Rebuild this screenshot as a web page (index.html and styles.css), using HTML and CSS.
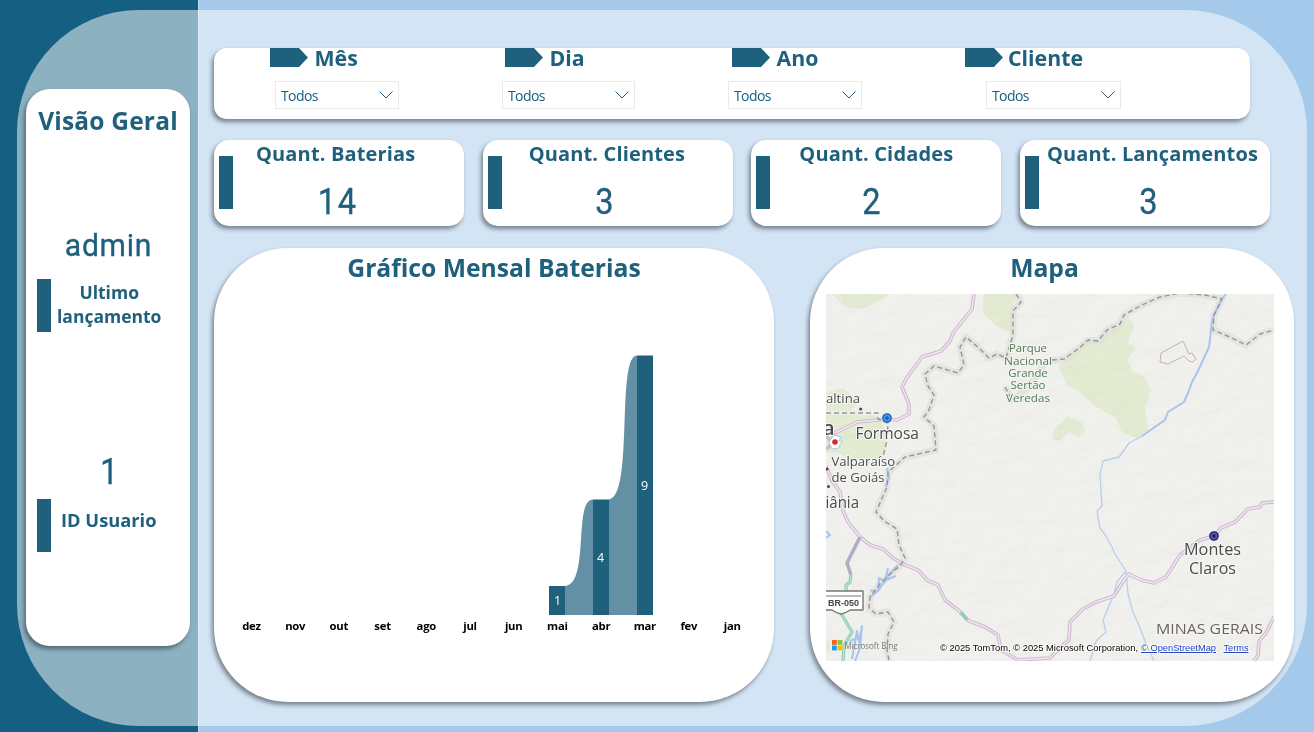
FILE: index.html
```html
<!DOCTYPE html>
<html lang="pt-BR">
<head>
<meta charset="utf-8">
<title>Visão Geral</title>
<link rel="stylesheet" href="styles.css">
</head>
<body>
<div class="shell">
  <aside class="rail">
    <section class="card overview">
      <h1 class="overview-title">Visão Geral</h1>
      <div class="value value-user"><span>admin</span></div>
      <div class="fact fact-user"><i class="bar"></i><h2>Ultimo<br>lançamento</h2></div>
      <div class="value value-id"><span>1</span></div>
      <div class="fact fact-id"><i class="bar"></i><h2>ID Usuario</h2></div>
    </section>
  </aside>
  <main class="main">
    <section class="card filters">
      <div class="filter f-mes">
        <h2><svg class="tag" viewBox="0 0 38 19"><path d="M0 0H29L38 9.5L29 19H0Z"/></svg><span>Mês</span></h2>
        <div class="select"><span>Todos</span><svg class="chev" viewBox="0 0 14 8"><path d="M.5 .5L7 7L13.500 .5"/></svg></div>
      </div>
      <div class="filter f-dia">
        <h2><svg class="tag" viewBox="0 0 38 19"><path d="M0 0H29L38 9.500L29 19H0Z"/></svg><span>Dia</span></h2>
        <div class="select"><span>Todos</span><svg class="chev" viewBox="0 0 14 8"><path d="M.5 .5L7 7L13.500 .5"/></svg></div>
      </div>
      <div class="filter f-ano">
        <h2><svg class="tag" viewBox="0 0 38 19"><path d="M0 0H29L38 9.500L29 19H0Z"/></svg><span>Ano</span></h2>
        <div class="select"><span>Todos</span><svg class="chev" viewBox="0 0 14 8"><path d="M.5 .5L7 7L13.500 .5"/></svg></div>
      </div>
      <div class="filter f-cliente">
        <h2><svg class="tag" viewBox="0 0 38 19"><path d="M0 0H29L38 9.500L29 19H0Z"/></svg><span>Cliente</span></h2>
        <div class="select"><span>Todos</span><svg class="chev" viewBox="0 0 14 8"><path d="M.5 .5L7 7L13.500 .5"/></svg></div>
      </div>
    </section>

    <section class="stats">
      <article class="card stat"><i class="bar"></i><div class="stat-body s1"><h2>Quant. Baterias</h2><p class="value"><span>14</span></p></div></article>
      <article class="card stat"><i class="bar"></i><div class="stat-body s2"><h2>Quant. Clientes</h2><p class="value"><span>3</span></p></div></article>
      <article class="card stat"><i class="bar"></i><div class="stat-body s3"><h2>Quant. Cidades</h2><p class="value"><span>2</span></p></div></article>
      <article class="card stat"><i class="bar"></i><div class="stat-body s4"><h2>Quant. Lançamentos</h2><p class="value"><span>3</span></p></div></article>
    </section>

    <section class="panels">
      <article class="card chart">
        <h2 class="panel-title">Gráfico Mensal Baterias</h2>
        <svg class="plot" viewBox="214 345 560 295">
          <g class="ribbon">
            <path d="M565 586C590 584 573 499.500 593 499.500V615H565Z"/>
            <path d="M609 499.500C634 496 616 355.500 637 355.500V615H609Z"/>
          </g>
          <g class="cols">
            <rect x="549" y="586" width="16" height="29"/>
            <rect x="593" y="499.500" width="16" height="115.500"/>
            <rect x="637" y="355.500" width="16" height="259.500"/>
          </g>
          <g class="nums">
            <text x="557.500" y="605">1</text>
            <text x="600.700" y="562">4</text>
            <text x="644.700" y="490">9</text>
          </g>
          <g class="months">
            <text x="251.500" y="630">dez</text><text x="295.200" y="630">nov</text>
            <text x="338.900" y="630">out</text><text x="382.600" y="630">set</text>
            <text x="426.300" y="630">ago</text><text x="470" y="630">jul</text>
            <text x="513.700" y="630">jun</text><text x="557.400" y="630">mai</text>
            <text x="601.100" y="630">abr</text><text x="644.800" y="630">mar</text>
            <text x="688.800" y="630">fev</text><text x="732.300" y="630">jan</text>
          </g>
        </svg>
      </article>

      <article class="card mapa">
        <h2 class="panel-title">Mapa</h2>
        <svg class="map" viewBox="826 294 448 367">
          <defs>
            <filter id="relief" x="0" y="0" width="100%" height="100%">
              <feTurbulence type="fractalNoise" baseFrequency=".035 .06" numOctaves="4" seed="8"/>
              <feDiffuseLighting surfaceScale="2.200" lighting-color="#fff"><feDistantLight azimuth="225" elevation="62"/></feDiffuseLighting>
              <feColorMatrix type="saturate" values="0"/>
            </filter>
          </defs>
          <rect class="land" x="826" y="294" width="448" height="367"/>
          <g class="park">
            <path d="M832 294L846 307L863 309L885 298L890 294Z"/>
            <path d="M983 294H1015L1011 333L995 325L983 312Z"/>
            <path d="M1058 366L1088 341L1100 341L1119 324L1128 315L1134 327L1128 342L1135 348L1127 361L1133 371L1144 376L1151 390L1145 408L1148 430L1136 438L1122 432L1116 418L1095 406L1080 392L1068 386Z"/>
            <path d="M1053 440L1054 429L1068 416L1081 422L1085 432L1078 438L1069 431L1061 440Z"/>
            <path d="M826 392L843 388L858 402L850 411H826ZM826 414L878 416L884 428L886 447L882 458L850 461L838 452L826 453ZM826 642L831 640L829 650L826 652Z"/>
          </g>
          <rect class="shade" x="826" y="294" width="448" height="367" filter="url(#relief)"/>
          <g class="halo">
            <path d="M1016 294L1021 302L1013 311L1013 335L1006 358L997 354L989 358L980 349L966 337L960 347L964 365L958 373L934 366L925 374L928 386L934 395L929 410L924 417L934 426L936 450L905 457L895 466L888 472L887 487L876 512L884 521L897 529L899 545L905 558L900 566L890 574L880 584L870 597L869 608L876 614L888 612L894 622L888 634L887 650L889 661"/>
            <path d="M1005 387L1012 400L1030 386L1045 362L1064 359L1078 349L1088 340L1098 341L1107 330L1120 324L1124 315L1140 306L1160 297L1180 293L1205 295L1222 299L1214 315L1213 330L1230 337L1246 345L1260 334L1274 330"/>
          </g>
          <g class="river">
            <path class="wide" d="M1226 294L1222 299L1214 315L1212 322L1209 347L1204 358L1197 373L1192 382L1188 393L1184 402L1168 412L1165 420L1142 436"/>
            <path d="M1142 436L1129 443L1119 457L1103 461L1100 475L1102 506L1097 511L1100 528L1106 536L1112 547L1115 554L1126 571L1117 582L1114 594L1103 620L1106 632L1096 641L1090 661M1126 572L1128 594L1133 612L1140 628L1145 641L1154 661"/>
            <path class="wide" d="M870 597L878 591L888 576L898 565M878 591L879 578L885 582L888 568M886 580L896 576M876 592L870 590M852 659L857 631L859 642L862 626L860 648L855 661M850 641L862 636M826 538L830 535L826 531M887 468L889 476L886 487"/>
          </g>
          <g class="roads">
            <path d="M974 294L972 309L953 333L950 341L941 351L922 357L906 379L902 387L909 404L909 414L897 420L887 419L857 422L835 433L830 446L826 449M826 436L833 443M826 466L832 481L840 492L843 511L848 522L860 537L870 545L883 549L893 558L905 565L918 570L927 580L938 585L945 600L958 610L969 621L985 627L998 635L1001 650L1018 660L1035 659L1050 658L1063 645L1069 640L1070 622L1083 609L1096 602L1114 596L1122 583L1129 574L1141 580L1154 583L1166 577L1180 555L1200 540L1214 536L1221 528L1235 522L1248 509L1260 507L1262 503L1274 502M1274 617L1266 633L1259 641L1258 655L1254 661"/>
            <path class="inner" d="M974 294L972 309L953 333L950 341L941 351L922 357L906 379L902 387L909 404L909 414L897 420L887 419L857 422L835 433M826 466L832 481L840 492L843 511L848 522L860 537L870 545L883 549L893 558L905 565L918 570L927 580L938 585L945 600L958 610L969 621L985 627L998 635L1001 650L1018 660L1035 659L1050 658L1063 645L1069 640L1070 622L1083 609L1096 602L1114 596L1122 583L1129 574L1141 580L1154 583L1166 577L1180 555L1200 540L1214 536L1221 528L1235 522L1248 509L1260 507L1262 503L1274 502M1274 617L1266 633L1259 641L1258 655L1254 661"/>
            <path class="slate" d="M860 537L853 551L847 563L851 575"/>
            <path class="green" d="M851 575L850 582L846 585L847 602L841 613L852 632L844 646L843 661M961 612L967 620"/>
            <path class="light" d="M851 575L850 582L846 585L847 602L841 613L852 632L844 646L843 661"/>
          </g>
          <g class="border">
            <path d="M1016 294L1021 302L1013 311L1013 335L1006 358L997 354L989 358L980 349L966 337L960 347L964 365L958 373L934 366L925 374L928 386L934 395L929 410L924 417L934 426L936 450L905 457L895 466L888 472L887 487L876 512L884 521L897 529L899 545L905 558L900 566L890 574L880 584L870 597L869 608L876 614L888 612L894 622L888 634L887 650L889 661"/>
            <path d="M1005 387L1012 400M1052 360L1064 359L1078 349L1088 340L1098 341L1107 330L1120 324L1124 315L1140 306L1160 297L1180 293L1205 295L1222 299L1214 315L1213 330L1230 337L1246 345L1260 334L1274 330"/>
            <path d="M826 413H878V419L888 423L887 440L883 457"/>
          </g>
          <path class="area" d="M1161 353L1183 341L1189 354L1192 353L1196 359L1193 362L1189 361L1184 356L1168 364L1160 362Z"/>
          <g class="shield"><path d="M820 591H863V610H850Q846 613 841 614Q836 613 832 610H820Z"/><path class="rule" d="M826 596H861"/><text x="843.500" y="606" textLength="31" lengthAdjust="spacingAndGlyphs">BR-050</text></g>
          <g class="places">
            <text x="826" y="403" textLength="34" lengthAdjust="spacingAndGlyphs">altina</text>
            <text class="big" x="823" y="435">a</text>
            <text class="city" x="855.500" y="439" textLength="63.500" lengthAdjust="spacingAndGlyphs">Formosa</text>
            <text x="831.500" y="466" textLength="63.500" lengthAdjust="spacingAndGlyphs">Valparaíso</text>
            <text x="831.500" y="481.500" textLength="53" lengthAdjust="spacingAndGlyphs">de Goiás</text>
            <text class="city" x="825.500" y="507.500" textLength="33.500" lengthAdjust="spacingAndGlyphs">iânia</text>
            <text class="city" x="1184" y="555" textLength="57" lengthAdjust="spacingAndGlyphs">Montes</text>
            <text class="city" x="1189" y="573.500" textLength="47" lengthAdjust="spacingAndGlyphs">Claros</text>
            <text class="state" x="1156" y="634" textLength="107" lengthAdjust="spacingAndGlyphs">MINAS GERAIS</text>
          </g>
          <g class="parkname">
            <text x="1028" y="352" textLength="38" lengthAdjust="spacingAndGlyphs">Parque</text>
            <text x="1028" y="364.500" textLength="48" lengthAdjust="spacingAndGlyphs">Nacional</text>
            <text x="1028" y="377" textLength="39.500" lengthAdjust="spacingAndGlyphs">Grande</text>
            <text x="1028" y="389.300" textLength="35" lengthAdjust="spacingAndGlyphs">Sertão</text>
            <text x="1028" y="401.800" textLength="44" lengthAdjust="spacingAndGlyphs">Veredas</text>
          </g>
          <g class="dots"><circle cx="860.700" cy="409" r="1.500"/><circle cx="827" cy="469" r="1.500"/><circle cx="828.500" cy="486.500" r="1.500"/></g>
          <path class="capital" d="M829 442L834 435L841 437L839 441L843 441L840 444L839 448L832 449Z"/>
          <circle class="red" cx="835" cy="442" r="2.800"/>
          <g class="pin-a"><circle cx="887" cy="418" r="4.200"/><circle class="core" cx="887" cy="418" r="1.200"/></g>
          <g class="pin-b"><circle cx="1214" cy="536" r="4.200"/><circle class="core" cx="1214" cy="536" r="1"/></g>
          <g><path fill="#f26022" d="M832 640h4.800v4.800H832z"/><path fill="#8bc53f" d="M837.600 640h4.800v4.800h-4.800z"/><path fill="#06a6f0" d="M832 645.600h4.800v4.800H832z"/><path fill="#fdbb0a" d="M837.600 645.600h4.800v4.800h-4.800z"/></g>
          <text class="bing" x="844.500" y="648.500" textLength="53" lengthAdjust="spacingAndGlyphs">Microsoft Bing</text>
          <g class="credit">
            <text x="940" y="651" textLength="198" lengthAdjust="spacingAndGlyphs">© 2025 TomTom, © 2025 Microsoft Corporation,</text>
            <text class="link" x="1141" y="651" textLength="75" lengthAdjust="spacingAndGlyphs">© OpenStreetMap</text>
            <text class="link" x="1223.500" y="651" textLength="25" lengthAdjust="spacingAndGlyphs">Terms</text>
          </g>
        </svg>
      </article>
    </section>
  </main>
</div>
</body>
</html>
```
FILE: styles.css
```css
* { box-sizing: border-box; }
body {
  margin: 0;
  width: 1314px;
  height: 732px;
  overflow: hidden;
  padding: 10px 7px 5px 17px;
  background: linear-gradient(90deg, #156082 198px, #c3dbf2 198px, #c3dbf2 199px, #a5c9eb 199px);
  font-family: "Open Sans", "Noto Sans", sans-serif;
  color: #1f607c;
}
h1, h2, p { margin: 0; font-weight: 700; white-space: nowrap; }
.shell {
  display: grid;
  grid-template-columns: 181px 1fr;
  height: 716px;
  border-radius: 122px;
  background: rgba(255, 255, 255, .51);
}
.card { background: #fff; box-shadow: -2px 3px 4px rgba(30, 35, 40, .5); }
.bar { display: block; flex: none; width: 14px; height: 53px; background: #1f607c; }

.rail { padding: 79px 8px 0 9px; }
.overview { height: 557px; border-radius: 24px; padding-top: 15px; }
.overview-title { font-size: 24.500px; line-height: 34px; text-align: center; letter-spacing: .2px; }
.value { font-family: "Roboto", sans-serif; font-weight: 400; text-align: center; -webkit-text-stroke: .35px #1f607c; }
.value span { display: inline-block; }
.value-user { margin-top: 87px; height: 40px; font-size: 32px; line-height: 40px; letter-spacing: .8px; }
.value-user span { transform: scaleX(.94); }
.value-id { margin-top: 118px; height: 44px; font-size: 36px; line-height: 44px; padding-left: 2px; }
.value-id span { transform: scaleX(.88); }
.fact { display: flex; padding-left: 11px; }
.fact h2 { line-height: 24px; text-align: center; }
.fact-user { margin-top: 14px; }
.fact-user h2 { margin: .5px 0 0 6px; font-size: 17.500px; }
.fact-id { margin-top: 5px; }
.fact-id h2 { margin: 9px 0 0 10px; font-size: 18.300px; }

.main { padding: 38px 12px 0 16px; }
.filters {
  display: grid;
  grid-template-columns: 232px 226px 237px 1fr;
  width: 1036px;
  height: 71px;
  padding-left: 56px;
  border-radius: 13px;
}
.filter h2 { display: flex; height: 20px; font-size: 21.300px; line-height: 20px; }
.filter h2 span { margin-left: 6.500px; }
.tag { flex: none; width: 38px; height: 19px; fill: #1f607c; }
.f-dia h2 { margin-left: 3px; }
.f-ano h2 { margin-left: 4px; }
.f-cliente h2 span { margin-left: 5px; }
.select {
  display: flex;
  align-items: center;
  justify-content: space-between;
  width: 133px;
  height: 28px;
  margin-top: 13px;
  padding: 0 5px;
  border: 1px solid #eaeaea;
  font-size: 14px;
  letter-spacing: -.6px;
  line-height: 26px;
  color: #156082;
}
.select span { padding-top: 2px; }
.f-mes .select { width: 124px; margin-left: 5px; }
.f-ano .select { width: 134px; }
.f-cliente .select { width: 135px; margin-left: 21px; }
.chev { width: 14px; height: 8px; fill: none; stroke: #156082; stroke-width: 1; }

.stats { display: grid; grid-template-columns: repeat(4, 250px); justify-content: space-between; width: 1056px; margin-top: 21px; }
.stat { display: flex; height: 86px; padding: 16px 0 0 5px; border-radius: 15px; }
.stat-body { margin-top: -16px; }
.stat-body h2 { padding-top: 4px; font-size: 20px; line-height: 20px; letter-spacing: .15px; }
.stat-body .value { margin-top: 16px; font-size: 37px; line-height: 44px; letter-spacing: 2px; }
.stat-body .value span { transform: scaleX(.88); }
.s1 { margin-left: 23px; } .s2 { margin-left: 27px; } .s3 { margin-left: 29px; } .s4 { margin-left: 8px; }
.s1 .value { padding-left: 5px; }
.s2 .value { padding-right: 2px; }
.s3 .value { padding-right: 7px; }
.s4 .value { padding-right: 6px; }

.panels { display: grid; grid-template-columns: 560px 484px; justify-content: space-between; width: 1080px; margin-top: 22px; }
.panels .card { height: 454px; border-radius: 74px; }
.panel-title { font-size: 24.700px; line-height: 40px; height: 46px; text-align: center; }
.chart .panel-title { height: 97px; }
.plot { display: block; width: 560px; height: 295px; }
.ribbon { fill: #6490a5; }
.cols { fill: #1f607c; }
.nums, .months { text-anchor: middle; }
.nums { fill: #fff; font-size: 12.500px; }
.months { fill: #000; font-size: 11.300px; font-weight: 700; letter-spacing: -.25px; }
.mapa { padding-left: 16px; }
.mapa .panel-title { padding-right: 31px; }

.map { display: block; width: 448px; height: 367px; overflow: hidden; }
.map path { stroke-linejoin: round; }
.land { fill: #f1f1ed; }
.shade { mix-blend-mode: multiply; opacity: .15; }
.park { fill: #e4ecd3; }
.halo { fill: none; stroke: #dededb; stroke-width: 7; opacity: .65; }
.border { fill: none; stroke: #979797; stroke-width: 1.400; stroke-dasharray: 5 3; }
.river { fill: none; stroke: #b7cfec; stroke-width: 1.300; }
.river .wide { stroke: #a8c4ee; stroke-width: 2; }
.roads { fill: none; stroke: #cfb8d2; stroke-width: 3.600; }
.roads .inner { stroke: #f1e8f1; stroke-width: 1.400; }
.roads .slate { stroke: #b3acc4; }
.roads .green { stroke: #8acfb5; stroke-width: 3.200; }
.roads .light { stroke: #c2e8da; stroke-width: 1; }
.area { fill: none; stroke: #c9afa8; stroke-width: 1; }
.shield path { fill: #fff; stroke: #777; stroke-width: 1.400; }
.shield .rule { stroke-width: 1; }
.shield text { text-anchor: middle; font: 700 9.500px "Liberation Sans", sans-serif; fill: #444; }
.places text { font-size: 13px; fill: #4a4a4a; stroke: #f7f7f5; stroke-width: 2px; paint-order: stroke; }
.places .city { font-size: 15.500px; }
.places .big { font-size: 20px; font-weight: 600; }
.places .state { font-size: 15px; fill: #6a605e; }
.parkname text { text-anchor: middle; font-size: 11px; fill: #517a5c; stroke: #f3f5ef; stroke-width: 2px; paint-order: stroke; }
.dots { fill: #444; }
.capital { fill: #fff; stroke: #a9cfe8; stroke-width: 1; }
.red { fill: #d52d27; }
.pin-a { fill: #4299f5; stroke: #1762b5; stroke-width: 1.300; }
.pin-a .core { fill: #1762b5; }
.pin-b { fill: #5557b5; stroke: #1d1f5f; stroke-width: 1.300; }
.pin-b .core { fill: #1d1f5f; }
.bing { font-size: 9.500px; fill: #777; }
.credit text { font: 9.500px "Liberation Sans", sans-serif; fill: #000; stroke: #fff; stroke-opacity: .7; stroke-width: 2px; paint-order: stroke; }
.credit .link { fill: #1a3fc4; text-decoration: underline; }
```
